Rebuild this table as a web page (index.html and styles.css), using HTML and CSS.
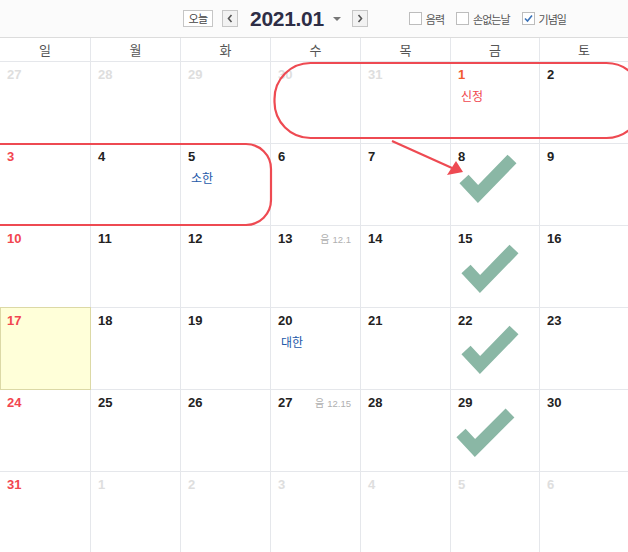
FILE: index.html
```html
<!DOCTYPE html>
<html lang="ko">
<head>
    <meta charset="UTF-8">
    <title>달력</title>
    <meta name="viewport" content="width=device-width, initial-scale=1">
    <link rel="stylesheet" href="styles.css">
</head>

<body>
<div class="calendar">
    <div class="toolbar">
        <button type="button" class="btn-today">오늘</button>
        <button type="button" class="btn-nav">
            <svg width="6" height="9" viewBox="0 0 6 9"><polyline points="4.5,1 1.5,4.5 4.5,8" fill="none" stroke="#555" stroke-width="1.6"/></svg>
        </button>
        <h1 class="month-title">2021.01</h1>
        <span class="caret"></span>
        <button type="button" class="btn-nav btn-next">
            <svg width="6" height="9" viewBox="0 0 6 9"><polyline points="1.5,1 4.5,4.5 1.5,8" fill="none" stroke="#555" stroke-width="1.6"/></svg>
        </button>
        <div class="options">
            <label class="opt"><span class="box"></span>음력</label>
            <label class="opt"><span class="box"></span>손없는날</label>
            <label class="opt"><span class="box checked">
                <svg width="11" height="11" viewBox="0 0 11 11"><polyline points="2,5.5 4.5,8 9,2.5" fill="none" stroke="#3b73b9" stroke-width="1.6"/></svg>
            </span>기념일</label>
        </div>
    </div>

    <div class="grid">
        <div class="dow">일</div>
        <div class="dow">월</div>
        <div class="dow">화</div>
        <div class="dow">수</div>
        <div class="dow">목</div>
        <div class="dow">금</div>
        <div class="dow">토</div>

        <div class="day other"><div class="top"><span class="num">27</span></div></div>
        <div class="day other"><div class="top"><span class="num">28</span></div></div>
        <div class="day other"><div class="top"><span class="num">29</span></div></div>
        <div class="day other"><div class="top"><span class="num">30</span></div></div>
        <div class="day other"><div class="top"><span class="num">31</span></div></div>
        <div class="day holiday-day"><div class="top"><span class="num">1</span></div><p class="note red">신정</p></div>
        <div class="day"><div class="top"><span class="num">2</span></div></div>

        <div class="day sun"><div class="top"><span class="num">3</span></div></div>
        <div class="day"><div class="top"><span class="num">4</span></div></div>
        <div class="day"><div class="top"><span class="num">5</span></div><p class="note blue">소한</p></div>
        <div class="day"><div class="top"><span class="num">6</span></div></div>
        <div class="day"><div class="top"><span class="num">7</span></div></div>
        <div class="day"><div class="top"><span class="num">8</span></div></div>
        <div class="day"><div class="top"><span class="num">9</span></div></div>

        <div class="day sun"><div class="top"><span class="num">10</span></div></div>
        <div class="day"><div class="top"><span class="num">11</span></div></div>
        <div class="day"><div class="top"><span class="num">12</span></div></div>
        <div class="day"><div class="top"><span class="num">13</span><span class="lunar">음<small>12.1</small></span></div></div>
        <div class="day"><div class="top"><span class="num">14</span></div></div>
        <div class="day"><div class="top"><span class="num">15</span></div></div>
        <div class="day"><div class="top"><span class="num">16</span></div></div>

        <div class="day sun today"><div class="top"><span class="num">17</span></div></div>
        <div class="day"><div class="top"><span class="num">18</span></div></div>
        <div class="day"><div class="top"><span class="num">19</span></div></div>
        <div class="day"><div class="top"><span class="num">20</span></div><p class="note blue">대한</p></div>
        <div class="day"><div class="top"><span class="num">21</span></div></div>
        <div class="day"><div class="top"><span class="num">22</span></div></div>
        <div class="day"><div class="top"><span class="num">23</span></div></div>

        <div class="day sun"><div class="top"><span class="num">24</span></div></div>
        <div class="day"><div class="top"><span class="num">25</span></div></div>
        <div class="day"><div class="top"><span class="num">26</span></div></div>
        <div class="day"><div class="top"><span class="num">27</span><span class="lunar">음<small>12.15</small></span></div></div>
        <div class="day"><div class="top"><span class="num">28</span></div></div>
        <div class="day"><div class="top"><span class="num">29</span></div></div>
        <div class="day"><div class="top"><span class="num">30</span></div></div>

        <div class="day sun"><div class="top"><span class="num">31</span></div></div>
        <div class="day other"><div class="top"><span class="num">1</span></div></div>
        <div class="day other"><div class="top"><span class="num">2</span></div></div>
        <div class="day other"><div class="top"><span class="num">3</span></div></div>
        <div class="day other"><div class="top"><span class="num">4</span></div></div>
        <div class="day other"><div class="top"><span class="num">5</span></div></div>
        <div class="day other"><div class="top"><span class="num">6</span></div></div>
    </div>

    <!-- hand-drawn annotations over the calendar -->
    <svg class="marks" width="628" height="552" viewBox="0 0 628 552">
        <g fill="none" stroke="#ee4a52" stroke-width="2.2">
            <rect x="274.5" y="63" width="368" height="75" rx="36"/>
            <rect x="-40" y="144" width="311" height="81" rx="25"/>
            <line x1="392" y1="141" x2="452" y2="168"/>
        </g>
        <polygon points="463,172 447,175 456,161" fill="#ee4a52"/>
        <g fill="none" stroke="#8ab7a5" stroke-width="12.5" stroke-linejoin="miter">
            <polyline points="464,179 478,194 512,159"/>
            <polyline points="466,269 480,284 514,249"/>
            <polyline points="466,350 480,365 514,330"/>
            <polyline points="461,433 475,448 510,413"/>
        </g>
    </svg>
</div>
</body>
</html>
```

FILE: styles.css
```css
body {
    margin: 0;
    background-color: white;
    font-family: "Noto Sans CJK KR", "Liberation Sans", sans-serif;
}
.calendar {
    position: relative;
    width: 628px;
    height: 552px;
    overflow: hidden;
}
.toolbar {
    height: 37px;
    display: flex;
    align-items: center;
    padding-left: 183px;
    background-color: #fbfbfb;
    border-bottom: 1px solid #dcdcdc;
}
.btn-today {
    width: 30px;
    height: 17px;
    padding: 0;
    font-family: "Noto Sans CJK KR", sans-serif;
    font-size: 11px;
    line-height: 15px;
    letter-spacing: -0.5px;
    color: #444;
    background-color: white;
    border: 1px solid #c6c6c6;
}
.btn-nav {
    width: 16px;
    height: 17px;
    margin-left: 9px;
    padding: 0;
    display: flex;
    align-items: center;
    justify-content: center;
    background-color: #f2f2f2;
    border: 1px solid #c6c6c6;
}
.btn-next {
    margin-left: 11px;
}
.month-title {
    margin: 0 0 0 12px;
    font-family: "Liberation Sans", Arial, sans-serif;
    font-size: 21px;
    font-weight: bold;
    letter-spacing: -0.3px;
    color: #2e2e46;
}
.caret {
    width: 0;
    height: 0;
    margin: 1px 0 0 9px;
    border-left: 4px solid transparent;
    border-right: 4px solid transparent;
    border-top: 4px solid #777;
}
.options {
    display: flex;
    align-items: center;
    margin-left: 41px;
    gap: 12px;
}
.opt {
    display: flex;
    align-items: center;
    gap: 4px;
    font-size: 11px;
    letter-spacing: -1px;
    color: #555;
}
.box {
    width: 11px;
    height: 11px;
    display: flex;
    align-items: center;
    justify-content: center;
    background-color: white;
    border: 1px solid #bdbdbd;
}
.grid {
    display: grid;
    grid-template-columns: 90px 89px 89px 89px 89px 88px 88px;
    grid-template-rows: 23px repeat(6, 81px);
    gap: 1px;
    background-color: #e5e7eb;
}
.dow {
    background-color: white;
    font-size: 13px;
    line-height: 23px;
    text-align: center;
    color: #555;
}
.day {
    background-color: white;
    padding: 5px 9px 0 7px;
}
.day .top {
    display: flex;
    justify-content: space-between;
    align-items: baseline;
}
.num {
    font-family: "Liberation Sans", Arial, sans-serif;
    font-size: 13px;
    font-weight: bold;
    line-height: 16px;
    color: #222;
}
.other .num {
    color: #dedede;
}
.sun .num {
    color: #f2464f;
}
.holiday-day .num {
    color: #f15b30;
}
.today {
    background-color: #ffffd9;
    outline: 1px solid #dcd9a6;
    box-shadow: inset 1px 0 0 #dcd9a6;
}
.lunar {
    font-size: 10px;
    color: #b0b0b0;
}
.lunar small {
    margin-left: 3px;
    font-family: "Liberation Sans", Arial, sans-serif;
    font-size: 9.5px;
}
.note {
    margin: 5px 0 0 3px;
    font-size: 12px;
    line-height: 16px;
}
.red {
    color: #f0464f;
}
.blue {
    color: #2459a9;
}
.marks {
    position: absolute;
    top: 0;
    left: 0;
    pointer-events: none;
}
```
